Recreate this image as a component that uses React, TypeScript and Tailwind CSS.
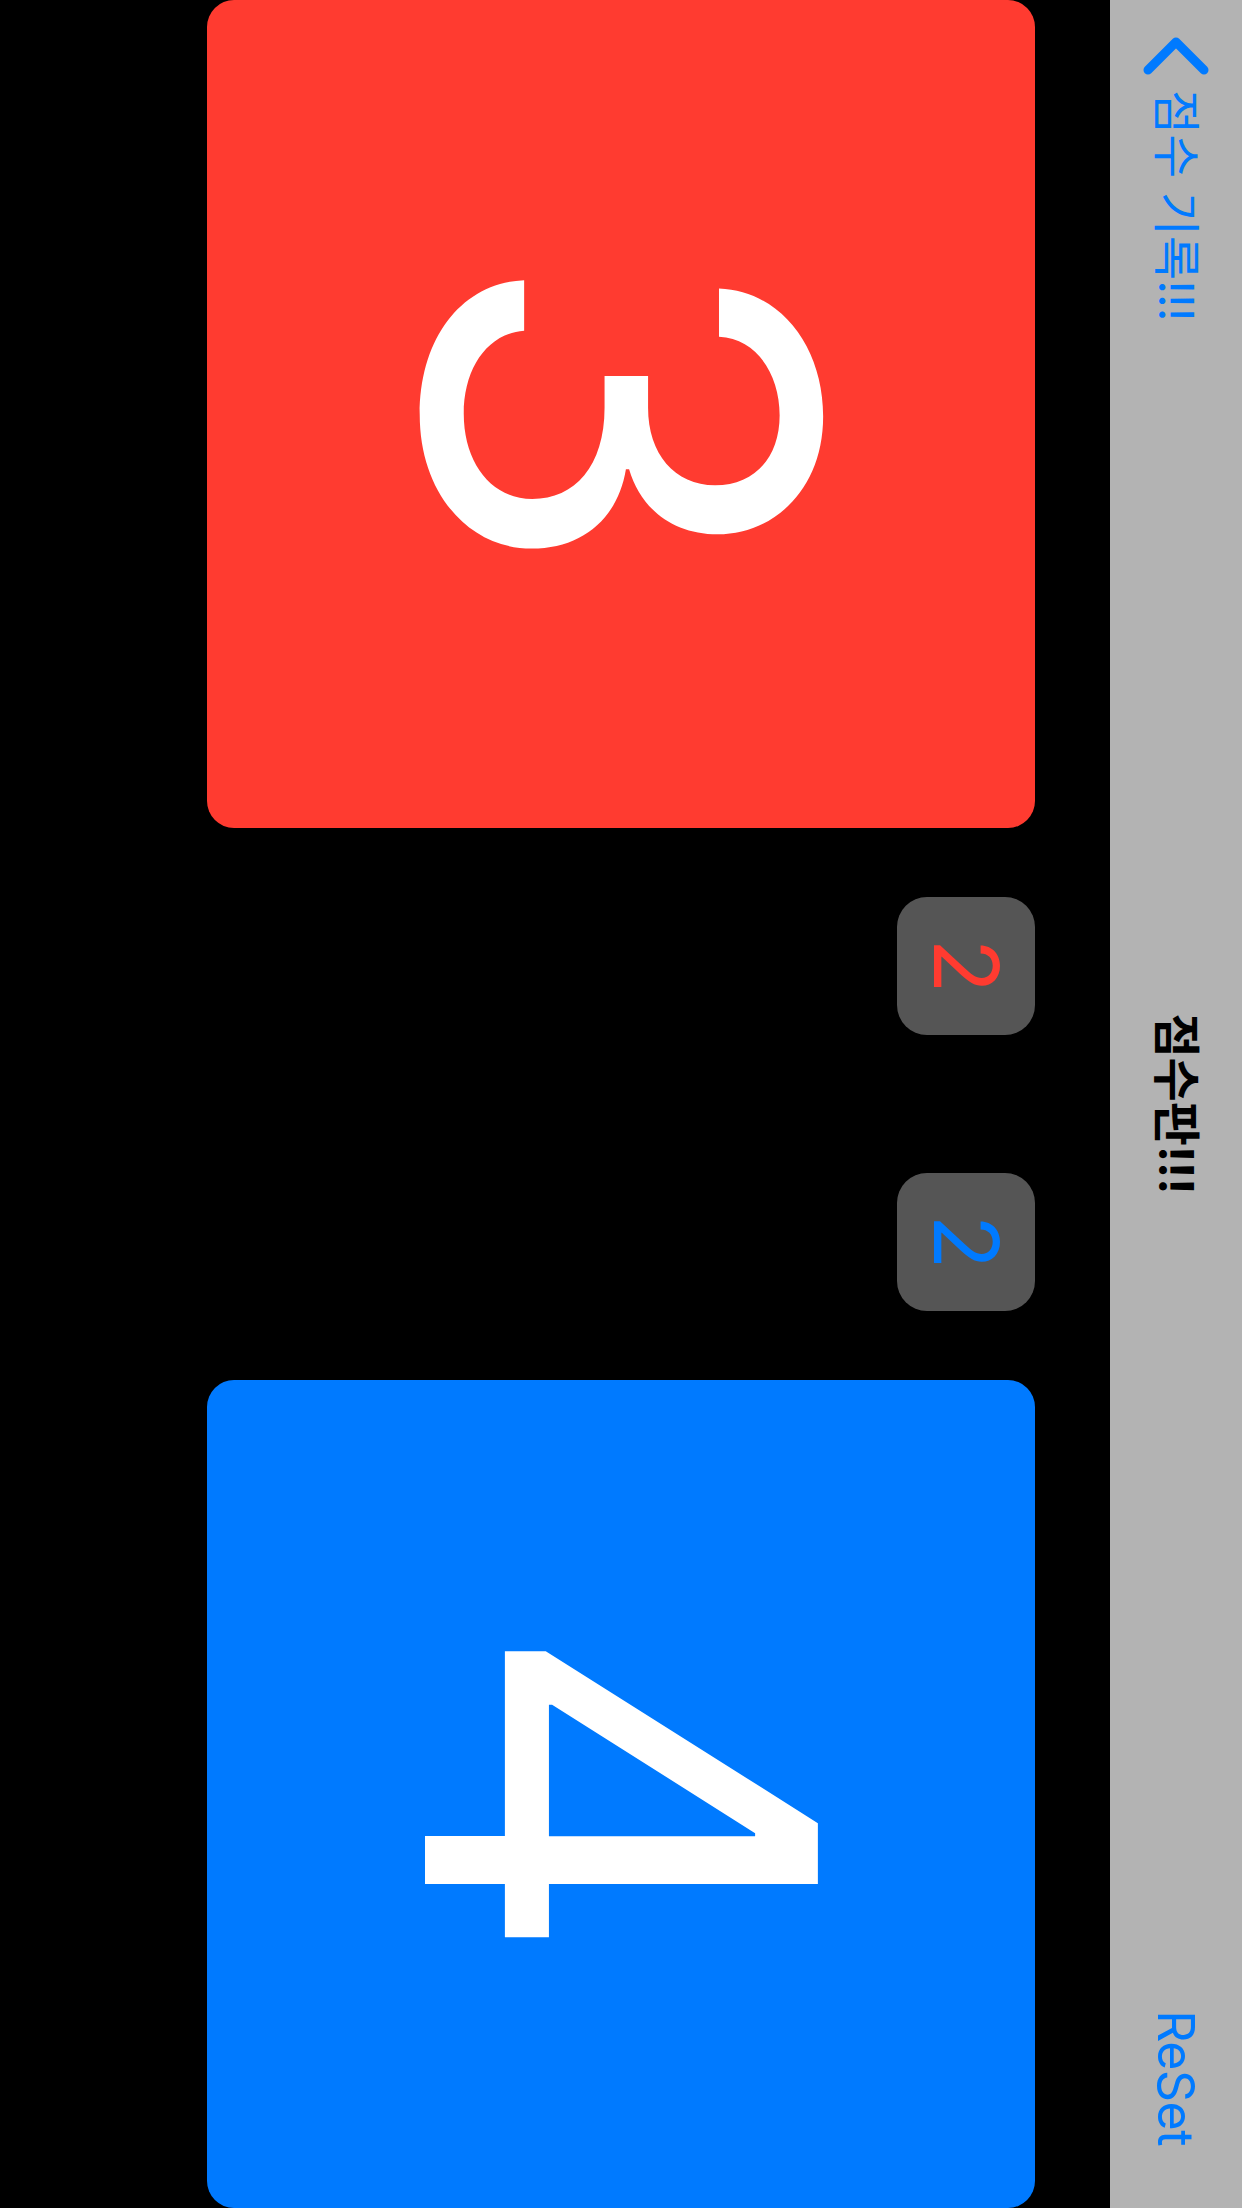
import React from "react";

const sans = "font-['Inter','Noto_Sans_CJK_KR',sans-serif]";

function Chevron() {
  return (
    <svg width="44" height="70" viewBox="0 0 44 70" className="block shrink-0">
      <path
        d="M36 7 L8 35 L36 63"
        fill="none"
        stroke="#007aff"
        strokeWidth="9"
        strokeLinecap="round"
        strokeLinejoin="round"
      />
    </svg>
  );
}

export default function App() {
  return (
    <div className="w-[1242px] h-[2208px] overflow-hidden bg-black">
      <div className="w-[2208px] h-[1242px] origin-top-left [transform:translateX(1242px)_rotate(90deg)] flex flex-col bg-black">
        <nav className="relative h-[132px] shrink-0 bg-[#b3b3b3] flex items-center">
          <div className="flex items-center pl-[34px] gap-[12px]">
            <Chevron />
            <span className={`${sans} text-[48px] leading-none text-[#007aff]`}>
              점수 기록!!!
            </span>
          </div>
          <div className="absolute inset-0 flex items-center justify-center pointer-events-none">
            <span className={`${sans} text-[48px] leading-none font-bold text-black`}>
              점수판!!!
            </span>
          </div>
          <span className={`${sans} ml-auto pr-[62px] text-[50px] leading-none text-[#007aff] tracking-[-0.5px]`}>
            ReSet
          </span>
        </nav>
        <div className="flex items-start pt-[75px]">
          <div className="w-[828px] h-[828px] shrink-0 rounded-[27px] bg-[#ff3b30] flex items-center justify-center">
            <span className={`${sans} text-[540px] leading-none text-white`}>3</span>
          </div>
          <div className="ml-[69px] w-[138px] h-[138px] shrink-0 rounded-[30px] bg-[#555555] flex items-center justify-center">
            <span className={`${sans} text-[90px] leading-none text-[#ff3b30]`}>2</span>
          </div>
          <div className="ml-[138px] w-[138px] h-[138px] shrink-0 rounded-[30px] bg-[#555555] flex items-center justify-center">
            <span className={`${sans} text-[90px] leading-none text-[#007aff]`}>2</span>
          </div>
          <div className="ml-[69px] w-[828px] h-[828px] shrink-0 rounded-[27px] bg-[#007aff] flex items-center justify-center">
            <span className={`${sans} text-[540px] leading-none text-white`}>4</span>
          </div>
        </div>
      </div>
    </div>
  );
}
